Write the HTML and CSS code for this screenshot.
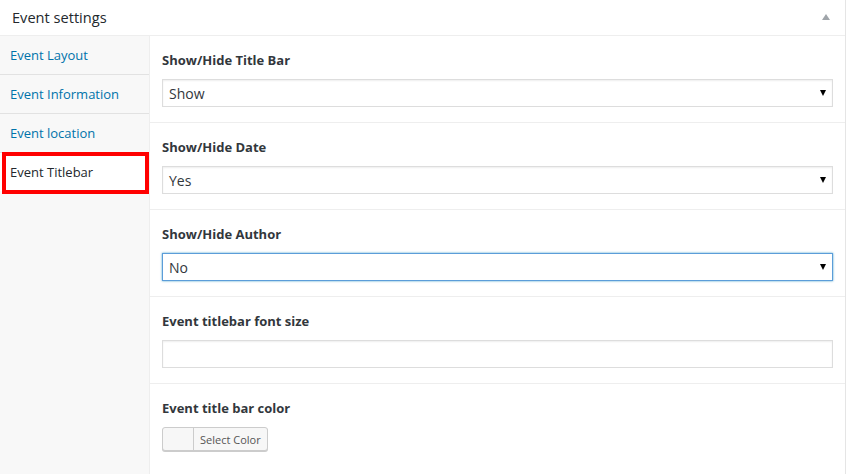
FILE: index.html
```html
<!DOCTYPE html>
<html>
<head>
<meta charset="utf-8">
<link rel="stylesheet" href="styles.css">
</head>
<body>
<div class="postbox">
  <div class="hndle">
    <span class="title">Event settings</span>
    <span class="toggle"></span>
  </div>
  <div class="inside">
    <ul class="tabs">
      <li class="tab"><a>Event Layout</a></li>
      <li class="tab"><a>Event Information</a></li>
      <li class="tab"><a>Event location</a></li>
      <li class="tab active"><a>Event Titlebar</a><span class="mark"></span></li>
    </ul>
    <div class="panel">
      <div class="field">
        <label class="lbl">Show/Hide Title Bar</label>
        <div class="sel"><span>Show</span></div>
      </div>
      <div class="field">
        <label class="lbl">Show/Hide Date</label>
        <div class="sel"><span>Yes</span></div>
      </div>
      <div class="field">
        <label class="lbl">Show/Hide Author</label>
        <div class="sel focus"><span>No</span></div>
      </div>
      <div class="field">
        <label class="lbl">Event titlebar font size</label>
        <div class="txt"></div>
      </div>
      <div class="field last">
        <label class="lbl">Event title bar color</label>
        <div class="colorbtn"><span class="swatch"></span><span class="cbtext">Select Color</span></div>
      </div>
    </div>
  </div>
</div>
</body>
</html>
```
FILE: styles.css
```css
html, body {
  margin: 0;
  padding: 0;
  background: #fff;
}
body {
  font-family: "Open Sans", "Noto Sans", sans-serif;
  color: #23282d;
}
.postbox {
  width: 846px;
  border-right: 1px solid #e5e5e5;
  box-sizing: border-box;
  background: #fff;
}
.hndle {
  height: 35px;
  border-bottom: 1px solid #eee;
  display: flex;
  align-items: center;
  justify-content: space-between;
  padding: 0 12px;
}
.title {
  font-size: 14.6px;
  line-height: 20px;
  color: #23282d;
  margin-top: -1px;
}
.toggle {
  width: 0;
  height: 0;
  border-left: 4px solid transparent;
  border-right: 4px solid transparent;
  border-bottom: 6px solid #a0a5aa;
  margin-right: 3px;
  margin-top: -1px;
}
.inside {
  display: flex;
}
.tabs {
  list-style: none;
  margin: 0;
  padding: 0;
  width: 149px;
  flex: none;
  background: #f8f8f8;
  border-right: 1px solid #eee;
}
.tab {
  position: relative;
  height: 38px;
  display: flex;
  align-items: center;
  padding: 0 10px;
  border-bottom: 1px solid #e2e2e2;
  font-size: 13px;
  color: #0073aa;
}
.tab a {
  color: inherit;
}
.tab.active {
  background: #fff;
  color: #23282d;
  border-bottom: none;
}
.mark {
  position: absolute;
  top: -1px;
  left: 2px;
  width: 147px;
  height: 42px;
  box-sizing: border-box;
  border: 4px solid #f00;
}
.panel {
  flex: 1;
}
.field {
  padding: 15px 12px 15px;
  border-bottom: 1px solid #eee;
}
.field.last {
  padding-bottom: 21px;
}
.lbl {
  display: block;
  font-size: 13px;
  font-weight: 700;
  line-height: 20px;
  color: #32373c;
  margin-top: -1px;
  margin-bottom: 9px;
}
.sel {
  position: relative;
  height: 28px;
  box-sizing: border-box;
  border: 1px solid #ddd;
  box-shadow: inset 0 1px 2px rgba(0,0,0,.07);
  display: flex;
  align-items: center;
  padding: 0 6px;
  font-size: 14px;
  color: #32373c;
}
.sel::after {
  content: "";
  position: absolute;
  right: 6px;
  top: 10px;
  width: 0;
  height: 0;
  border-left: 3.5px solid transparent;
  border-right: 3.5px solid transparent;
  border-top: 6px solid #000;
}
.sel.focus {
  border-color: #5b9dd9;
  box-shadow: 0 0 2px rgba(30,140,190,.8);
}
.txt {
  height: 28px;
  box-sizing: border-box;
  border: 1px solid #ddd;
  box-shadow: inset 0 1px 2px rgba(0,0,0,.07);
}
.colorbtn {
  display: inline-flex;
  height: 24px;
  box-sizing: border-box;
  border: 1px solid #ccc;
  border-radius: 3px;
  background: #f7f7f7;
  box-shadow: 0 1px 0 #ccc;
  font-size: 11px;
  color: #555;
}
.swatch {
  width: 30px;
  border-right: 1px solid #ccc;
}
.cbtext {
  display: flex;
  align-items: center;
  padding: 0 6px 0 6px;
}
```
